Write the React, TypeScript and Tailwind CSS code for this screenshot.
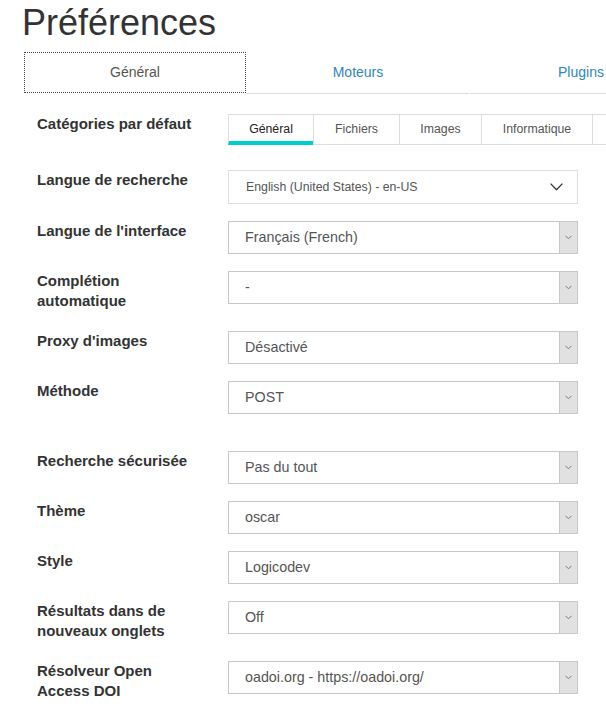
import React from "react";

const font = "font-['Liberation_Sans',Arial,sans-serif]";

function NativeSelect({ value }: { value: string }) {
  return (
    <div className="flex h-[33px] w-[350px] border border-[#c8c8c8] bg-white">
      <div className="flex flex-1 items-center pl-[16px] text-[14.3px] text-[#555]">{value}</div>
      <div className="flex w-[18px] items-center justify-center border-l border-[#c8c8c8] bg-[#e1e1e1]">
        <svg width="7" height="5" viewBox="0 0 7 5">
          <polyline points="0.5,0.8 3.5,3.8 6.5,0.8" fill="none" stroke="#7a7a7a" strokeWidth="1" />
        </svg>
      </div>
    </div>
  );
}

function Row({
  label,
  twoLine,
  className,
  children,
}: {
  label: React.ReactNode;
  twoLine?: boolean;
  className?: string;
  children: React.ReactNode;
}) {
  return (
    <div className={"flex items-start " + (className ?? "")}>
      <div
        className={
          "w-[191px] shrink-0 text-[15px] font-bold leading-[20px] text-[#333] " +
          (twoLine ? "pb-[3px] pr-[40px]" : "")
        }
      >
        {label}
      </div>
      {children}
    </div>
  );
}

export default function App() {
  return (
    <div className={"h-[707px] w-[606px] overflow-hidden bg-white " + font}>
      <h1 className="pl-[22px] pt-[2px] text-[36px] font-normal leading-[41px] text-[#333]">
        Préférences
      </h1>

      <div className="ml-[24px] mt-[9px] flex w-max gap-px">
        <div className="flex h-[41px] w-[222px] items-center justify-center border border-dotted border-[#444] text-[14px] text-[#555]">
          Général
        </div>
        <div className="flex h-[42px] w-[222px] items-center justify-center border-b border-[#ddd] text-[14px] text-[#2e86c1]">
          Moteurs
        </div>
        <div className="flex h-[42px] w-[222px] items-center justify-center border-b border-[#ddd] text-[14px] text-[#2e86c1]">
          Plugins
        </div>
      </div>

      <div className="mt-[20px] flex flex-col gap-[17px] pl-[37px]">
        <Row label="Catégories par défaut">
          <div className="flex w-max">
            <div className="flex h-[31px] w-[85px] items-center justify-center border-l border-t border-b-[4px] border-l-[#ddd] border-t-[#ddd] border-b-[#00cfcf] pt-[3px] text-[12.3px] text-[#222]">
              Général
            </div>
            <div className="flex h-[31px] w-[86px] items-center justify-center border-l border-t border-b border-[#ddd] text-[12.3px] text-[#555]">
              Fichiers
            </div>
            <div className="flex h-[31px] w-[82px] items-center justify-center border-l border-t border-b border-[#ddd] text-[12.3px] text-[#555]">
              Images
            </div>
            <div className="flex h-[31px] w-[111px] items-center justify-center border-l border-t border-b border-[#ddd] text-[12.3px] text-[#555]">
              Informatique
            </div>
            <div className="flex h-[31px] w-[100px] items-center justify-center border-l border-t border-b border-[#ddd] text-[12.3px] text-[#555]"></div>
          </div>
        </Row>

        <Row label="Langue de recherche" className="mt-[8px]">
          <div className="flex h-[34px] w-[350px] items-center justify-between border border-[#ddd] bg-white pl-[17px] pr-[14px]">
            <span className="text-[12.3px] text-[#555]">English (United States) - en-US</span>
            <svg width="13" height="8" viewBox="0 0 13 8">
              <polyline points="0.6,0.6 6.5,6.8 12.4,0.6" fill="none" stroke="#333" strokeWidth="1.3" />
            </svg>
          </div>
        </Row>

        <Row label="Langue de l'interface">
          <NativeSelect value="Français (French)" />
        </Row>

        <Row label="Complétion automatique" twoLine>
          <NativeSelect value="-" />
        </Row>

        <Row label="Proxy d'images">
          <NativeSelect value="Désactivé" />
        </Row>

        <Row label="Méthode">
          <NativeSelect value="POST" />
        </Row>

        <Row label="Recherche sécurisée" className="mt-[20px]">
          <NativeSelect value="Pas du tout" />
        </Row>

        <Row label="Thème">
          <NativeSelect value="oscar" />
        </Row>

        <Row label="Style">
          <NativeSelect value="Logicodev" />
        </Row>

        <Row label="Résultats dans de nouveaux onglets" twoLine>
          <NativeSelect value="Off" />
        </Row>

        <Row label="Résolveur Open Access DOI" twoLine>
          <NativeSelect value="oadoi.org - https://oadoi.org/" />
        </Row>
      </div>
    </div>
  );
}
